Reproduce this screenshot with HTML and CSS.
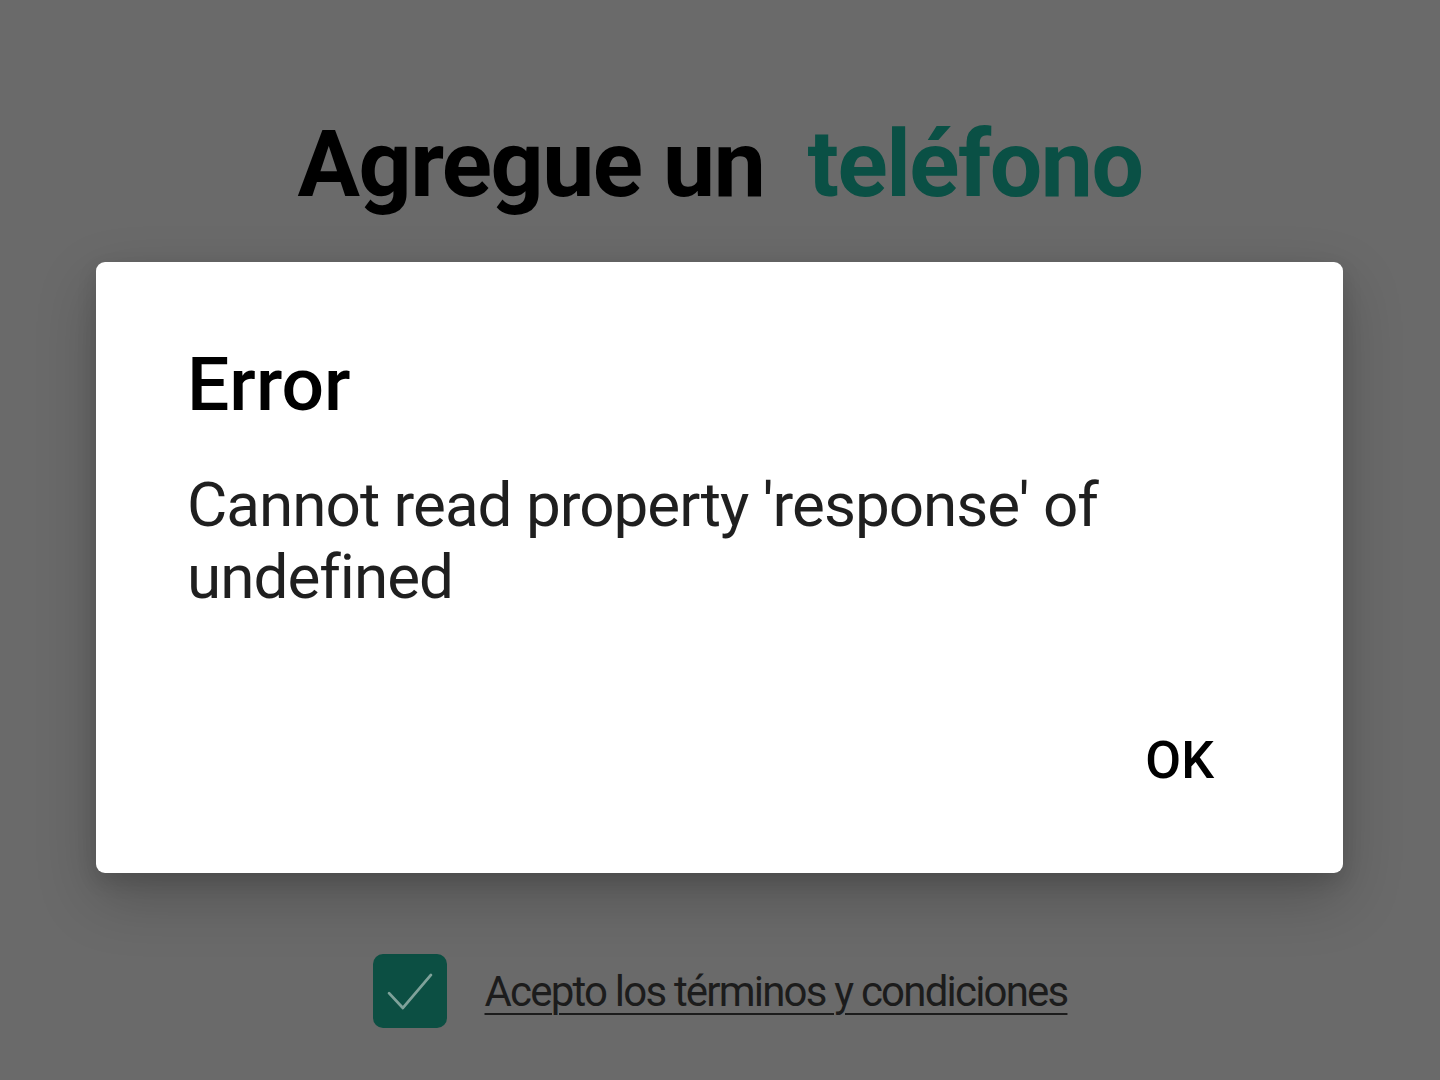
FILE: index.html
```html
<!DOCTYPE html>
<html lang="es">
<head>
  <meta charset="UTF-8">
  <meta name="viewport" content="width=device-width, initial-scale=1.0">
  <title>Agregue un teléfono</title>
  <link rel="stylesheet" href="styles.css">
</head>
<body>
  <div class="screen">
    <h1 class="title">Agregue un&nbsp; <span class="accent">teléfono</span></h1>

    <div class="spacer"></div>

    <!-- Terms -->
    <label class="terms">
      <span class="checkbox">
        <svg viewBox="0 0 24 24" width="74" height="74">
          <path d="M5.2 12.7l4.5 4.8 9.1-10.7" fill="none" stroke="#7fa29a" stroke-width="0.9" stroke-linecap="round" stroke-linejoin="round"/>
        </svg>
      </span>
      <span class="terms-text">Acepto los términos y condiciones</span>
    </label>
  </div>

  <!-- Error dialog -->
  <div class="dialog">
    <h2 class="dialog-title">Error</h2>
    <p class="dialog-body">Cannot read property 'response' of undefined</p>
    <div class="dialog-actions">
      <button class="dialog-btn">OK</button>
    </div>
  </div>
</body>
</html>
```

FILE: styles.css
```css
body {
  margin: 0;
  padding: 0;
  font-family: Roboto, "Noto Sans", sans-serif;
  background-color: #6a6a6a;
  height: 1080px;
  overflow: hidden;
}
.screen {
  display: flex;
  flex-direction: column;
  align-items: center;
  height: 1080px;
}
.title {
  margin: 106px 0 0 0;
  font-size: 93px;
  font-weight: 700;
  line-height: 118px;
  color: #000;
  letter-spacing: -1.5px;
}
.accent {
  color: #0a5045;
}
.spacer {
  height: 730px;
}
.terms {
  display: flex;
  align-items: center;
  gap: 38px;
  margin-left: 0;
}
.checkbox {
  width: 74px;
  height: 74px;
  border-radius: 10px;
  background-color: #0c4f43;
  display: flex;
}
.terms-text {
  font-size: 42px;
  color: #1c1c1c;
  letter-spacing: -1.8px;
  text-decoration: underline;
  text-underline-offset: 7px;
  text-decoration-thickness: 2px;
}
.dialog {
  position: absolute;
  left: 96px;
  top: 262px;
  width: 1247px;
  height: 611px;
  box-sizing: border-box;
  padding: 70px 91px 0 91px;
  background-color: #ffffff;
  border-radius: 9px;
  box-shadow: 0 24px 60px rgba(0, 0, 0, 0.22), 0 8px 20px rgba(0, 0, 0, 0.12);
}
.dialog-title {
  margin: 0;
  font-size: 75px;
  font-weight: 500;
  line-height: 104px;
  color: #000;
}
.dialog-body {
  margin: 33px 0 0 0;
  font-size: 62px;
  line-height: 72px;
  color: #1f1f1f;
  letter-spacing: -1px;
}
.dialog-actions {
  display: flex;
  justify-content: flex-end;
  margin-top: 117px;
  padding-right: 38px;
}
.dialog-btn {
  border: none;
  background: none;
  padding: 0;
  font-family: Roboto, "Noto Sans", sans-serif;
  font-size: 52px;
  font-weight: 500;
  color: #000;
  cursor: pointer;
}
```
